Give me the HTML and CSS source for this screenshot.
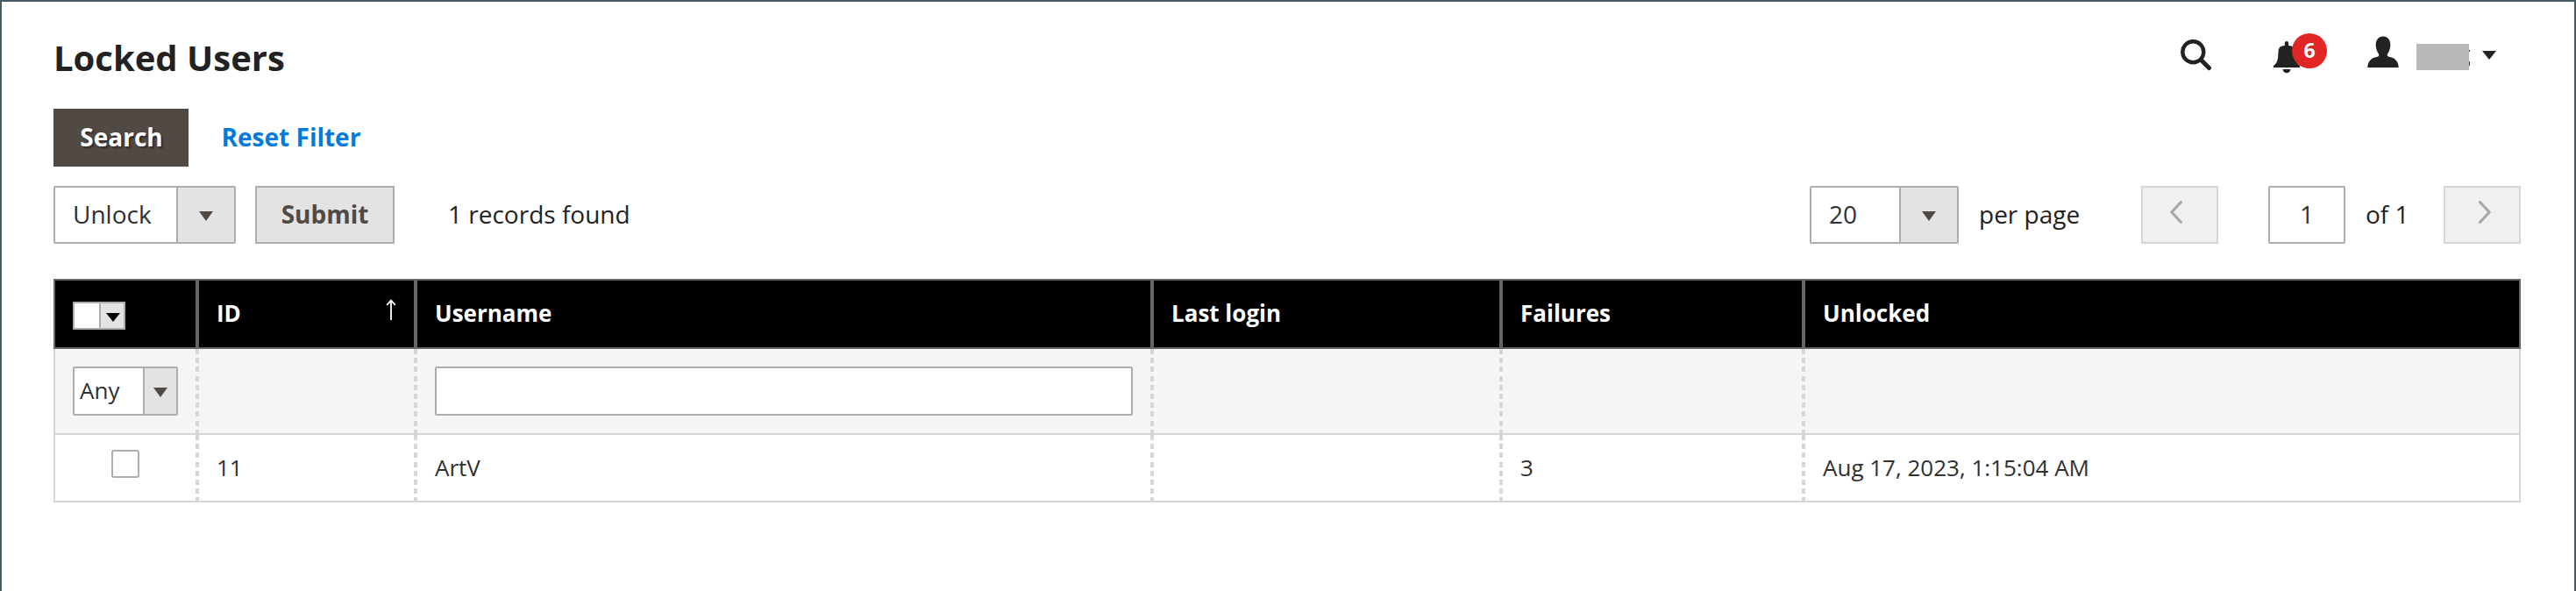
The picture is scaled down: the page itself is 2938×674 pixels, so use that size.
FILE: index.html
```
<!DOCTYPE html>
<html lang="en">
<head>
<meta charset="utf-8">
<title>Locked Users</title>
<link rel="stylesheet" href="styles.css">
</head>
<body>
<div class="page">
  <header class="page-header">
    <h1 class="page-title">Locked Users</h1>
    <div class="header-tools">
      <svg class="icon-search" width="36" height="36" viewBox="0 0 36 36"><circle cx="14.3" cy="14.3" r="12" fill="none" stroke="#222" stroke-width="4.4"/><path d="M23.5 23.5L32.5 32.5" stroke="#222" stroke-width="5" stroke-linecap="round"/></svg>
      <div class="notifications">
        <svg class="icon-bell" width="30" height="37" viewBox="0 0 30 37" fill="#222"><path d="M15 0C13.600 0 12.800 1 12.800 2.400V5C8 5.200 6 7 5.600 11C5.200 15 5.600 19 4 23C3 25.500 1.500 26.500 0 28V30H30V28C28.500 26.500 27 25.500 26 23C24.400 19 24.800 15 24.400 11C24 7 22 5.200 17.200 5V2.400C17.200 1 16.400 0 15 0Z"/><path d="M10.500 32H19.500C19.200 34.500 17.500 36.300 15 36.300C12.500 36.300 10.800 34.500 10.500 32Z"/></svg>
        <span class="badge">6</span>
      </div>
      <svg class="icon-user" width="36" height="37" viewBox="0 0 36 37" fill="#222"><path d="M18 0.500C12.500 0.500 9.500 5 9.700 10.500C9.800 15 11.500 18.500 13 20.500C13.600 22 13.300 23.300 11.500 23.700C5 25 0.500 28 0.300 36H35.700C35.500 28 31 25 24.500 23.700C22.700 23.300 22.400 22 23 20.500C24.500 18.500 26.200 15 26.300 10.500C26.500 5 23.500 0.500 18 0.500Z"/></svg>
      <svg class="account-name" width="62" height="30" viewBox="0 0 62 30"><path d="M0 0H60V30H0Z" fill="#b9b9b9"/><path d="M60 7H61V9H60ZM60 20H61V25H60Z" fill="#444"/></svg>
      <svg class="account-caret" width="16" height="10" viewBox="0 0 16 10"><path d="M0 0H16L8 10Z" fill="#222"/></svg>
    </div>
  </header>

  <div class="filter-actions">
    <button class="button primary">Search</button>
    <button class="button link">Reset Filter</button>
  </div>

  <div class="toolbar">
    <div class="select massaction"><span class="select-value">Unlock</span><span class="select-toggle"><svg width="16" height="11" viewBox="0 0 16 11"><path d="M0 0H16L8 11Z" fill="#514943"/></svg></span></div>
    <button class="button submit">Submit</button>
    <span class="records">1 records found</span>
    <div class="pager">
      <div class="select limit"><span class="select-value">20</span><span class="select-toggle"><svg width="16" height="11" viewBox="0 0 16 11"><path d="M0 0H16L8 11Z" fill="#514943"/></svg></span></div>
      <span class="per-page">per page</span>
      <button class="page-button previous"><svg width="14" height="26" viewBox="0 0 14 26"><path d="M12.500 1.500L1.800 13L12.500 24.500" fill="none" stroke="#a8a6a4" stroke-width="3" stroke-linecap="round" stroke-linejoin="round"/></svg></button>
      <span class="page-input">1</span>
      <span class="page-total">of 1</span>
      <button class="page-button next"><svg width="14" height="26" viewBox="0 0 14 26"><path d="M1.500 1.500L12.200 13L1.500 24.500" fill="none" stroke="#a8a6a4" stroke-width="3" stroke-linecap="round" stroke-linejoin="round"/></svg></button>
    </div>
  </div>

  <div class="grid">
    <div class="row head">
      <div class="cell"><div class="select-all"><span class="all-box"></span><span class="all-toggle"><svg width="16" height="10" viewBox="0 0 16 10"><path d="M0 0H16L8 10Z" fill="#000"/></svg></span></div></div>
      <div class="cell sorted"><span>ID</span><svg class="sort-arrow" width="12" height="24" viewBox="0 0 12 24"><path d="M6 24V2M1.200 6.800L6 1.600L10.800 6.800" fill="none" stroke="#fff" stroke-width="1.800"/></svg></div>
      <div class="cell">Username</div>
      <div class="cell">Last login</div>
      <div class="cell">Failures</div>
      <div class="cell">Unlocked</div>
    </div>
    <div class="row filters">
      <div class="cell"><div class="select small"><span class="select-value">Any</span><span class="select-toggle"><svg width="16" height="11" viewBox="0 0 16 11"><path d="M0 0H16L8 11Z" fill="#514943"/></svg></span></div></div>
      <div class="cell"></div>
      <div class="cell"><input class="text-input" type="text" aria-label="Username"></div>
      <div class="cell"></div>
      <div class="cell"></div>
      <div class="cell"></div>
    </div>
    <div class="row data">
      <div class="cell check"><span class="checkbox"></span></div>
      <div class="cell">11</div>
      <div class="cell">ArtV</div>
      <div class="cell"></div>
      <div class="cell">3</div>
      <div class="cell">Aug 17, 2023, 1:15:04 AM</div>
    </div>
  </div>
</div>
</body>
</html>
```
FILE: styles.css
```
* { box-sizing: border-box; }

body {
  margin: 0;
  background: #fff;
  color: #222;
  font-family: "Open Sans", "Noto Sans", sans-serif;
  font-size: 28px;
}

svg { display: block; flex: none; }

.page {
  height: 674px;
  border: 2px solid #455a64;
  border-bottom: 0;
  padding: 34px 61px 0 59px;
  overflow: hidden;
}

.page-header {
  display: flex;
  justify-content: space-between;
  height: 88px;
}

.page-title {
  margin: 0;
  font-size: 40px;
  line-height: 60px;
  font-weight: 700;
}

.header-tools {
  display: flex;
  align-items: flex-start;
  padding-right: 28px;
}

.icon-search { margin: 9px 70px 0 0; }

.notifications {
  position: relative;
  margin: 11px 77px 0 0;
}

.badge {
  position: absolute;
  left: 21px;
  top: -9px;
  width: 40px;
  height: 40px;
  border-radius: 50%;
  background: #e22626;
  color: #fff;
  font-size: 23px;
  line-height: 39px;
  font-weight: 700;
  text-align: center;
}

.icon-user { margin: 5px 20px 0 0; }
.account-name { margin: 14px 13px 0 0; }
.account-caret { margin-top: 22px; }

.button {
  height: 66px;
  padding: 0 0 2px;
  border: 0;
  border-radius: 0;
  font: 600 28px/64px "Open Sans", sans-serif;
  text-align: center;
}

.filter-actions { display: flex; margin-bottom: 22px; }

.primary {
  width: 154px;
  padding-left: 1px;
  background: #514943;
  color: #fff;
  font-weight: 700;
  text-shadow: 2px 2px 2px rgba(0, 0, 0, .4);
}

.link {
  width: 234px;
  background: none;
  color: #007bdb;
  font-weight: 700;
}

.toolbar {
  display: flex;
  height: 66px;
  margin-bottom: 40px;
  line-height: 64px;
}

.select {
  display: flex;
  height: 66px;
  border: 2px solid #adadad;
  border-radius: 2px;
  background: #fff;
  color: #303030;
  line-height: 60px;
}

.select-value { flex: 1; padding-left: 20px; }

.select-toggle {
  display: flex;
  align-items: center;
  justify-content: center;
  width: 66px;
  border-left: 2px solid #adadad;
  background: #e3e3e3;
}

.select-toggle svg { margin-top: 3px; }

.massaction { width: 208px; margin-right: 22px; }
.limit { width: 170px; }

.submit {
  width: 159px;
  border: 2px solid #adadad;
  background: #e3e3e3;
  color: #514943;
  font-weight: 700;
  line-height: 60px;
}

.records { margin-left: 61px; }

.pager { display: flex; margin-left: auto; }

.per-page { width: 208px; padding-left: 23px; }

.page-button {
  display: flex;
  align-items: center;
  justify-content: center;
  width: 88px;
  height: 66px;
  padding: 0 8px 6px 0;
  border: 2px solid #d6d6d6;
  background: #f0f0f0;
}

.next { padding: 0 0 6px 6px; }

.page-input {
  width: 88px;
  height: 66px;
  margin-left: 57px;
  border: 2px solid #adadad;
  border-radius: 2px;
  color: #303030;
  line-height: 60px;
  text-align: center;
}

.page-total { width: 112px; padding-left: 23px; }

.grid { font-size: 26px; }

.row {
  display: grid;
  grid-template-columns: 160px 249px 840px 398px 345px 1fr;
  border: 2px solid #d6d6d6;
  border-top: 0;
}

.cell {
  display: flex;
  align-items: center;
  padding: 0 20px 2px;
}

.cell + .cell { border-left: 4px solid #666; }

.head {
  height: 80px;
  border: 2px solid #666;
  background: #000;
  color: #fff;
  font-weight: 700;
}

.sorted { justify-content: space-between; }
.sort-arrow { margin-bottom: 9px; }

.select-all {
  display: flex;
  width: 60px;
  height: 32px;
  margin-top: 6px;
  border: 2px solid #adadad;
  background: #fff;
}

.all-box { flex: 1; }

.all-toggle {
  display: flex;
  align-items: center;
  justify-content: center;
  width: 28px;
  padding: 4px 0 0 2px;
  border-left: 2px solid #adadad;
  background: #e3e3e3;
}

.filters { height: 98px; background: #f5f5f5; }
.filters .cell { padding-bottom: 0; }

.filters .cell + .cell,
.data .cell + .cell {
  border-left: 0;
  padding-left: 24px;
  background: repeating-linear-gradient(#d6d6d6 0 6px, transparent 6px 10.2px) left top / 4px 100% no-repeat;
}

.small { width: 120px; height: 56px; line-height: 50px; }
.small .select-value { padding-left: 6px; }
.small .select-toggle { width: 38px; }

.text-input {
  width: 100%;
  height: 56px;
  border: 2px solid #adadad;
  border-radius: 2px;
  background: #fff;
}

.data { height: 77px; color: #303030; }

.check { justify-content: center; }

.checkbox {
  width: 32px;
  height: 32px;
  margin-bottom: 7px;
  border: 2px solid #adadad;
  border-radius: 3px;
}
```
